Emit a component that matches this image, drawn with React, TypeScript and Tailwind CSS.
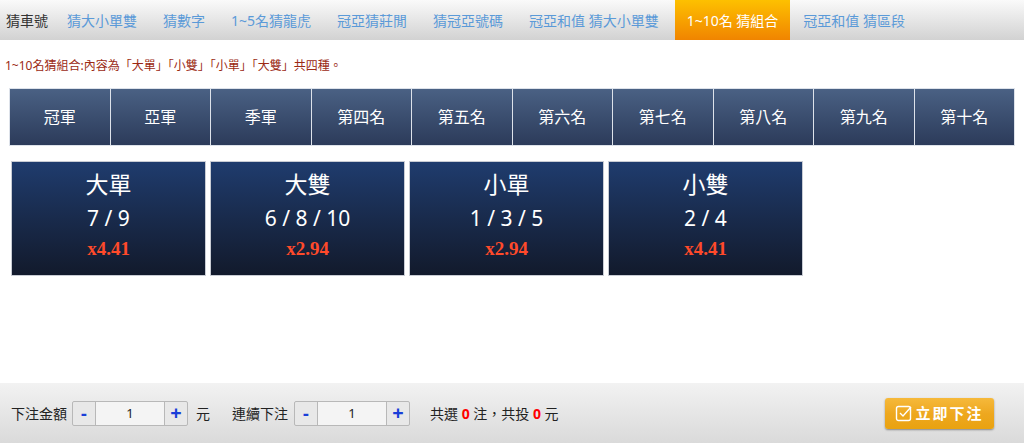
const F = { fontFamily: '"Noto Sans","Noto Sans CJK TC",sans-serif' };
const tabs = ["猜大小單雙","猜數字","1~5名猜龍虎","冠亞猜莊閒","猜冠亞號碼","冠亞和值 猜大小單雙"];
const heads = ["冠軍","亞軍","季軍","第四名","第五名","第六名","第七名","第八名","第九名","第十名"];
const cards = [["大單","7 / 9","x4.41"],["大雙","6 / 8 / 10","x2.94"],["小單","1 / 3 / 5","x2.94"],["小雙","2 / 4","x4.41"]];
function Spin() {
  return (
    <div className="flex items-center h-[25px] border border-[#b8b8b8] rounded-[2px] bg-[#e8e8e8]">
      <span className="w-[22px] text-center text-[#1a3fd8] font-bold text-[18px] leading-none">-</span>
      <div className="w-[70px] h-full bg-[#f4f4f4] border-x border-[#b8b8b8] text-center text-[13px] leading-[23px] text-[#222]">1</div>
      <span className="w-[22px] text-center text-[#1a3fd8] font-bold text-[20px] leading-none">+</span>
    </div>
  );
}
export default function App() {
  return (
    <div style={F} className="w-[1024px] h-[443px] bg-white flex flex-col overflow-hidden">
      <div className="h-[40px] flex items-stretch bg-gradient-to-b from-[#fafafa] to-[#d2d2d2] text-[14px]">
        <div className="px-[6px] flex items-center text-[#333]">猜車號</div>
        {tabs.map(t => <div key={t} className="px-[13px] flex items-center text-[#5b9ad8]">{t}</div>)}
        <div className="px-[12px] ml-[3px] flex items-center text-white bg-gradient-to-b from-[#fdc000] to-[#f08400]">1~10名 猜組合</div>
        <div className="px-[13px] flex items-center text-[#5b9ad8]">冠亞和值 猜區段</div>
      </div>
      <div className="text-[12px] text-[#9b2a14] pl-[5px] mt-[17px] leading-[18px]">1~10名猜組合:內容為「大單」「小雙」「小單」「大雙」共四種。</div>
      <div className="mx-[9px] mt-[13px] grid grid-cols-10 gap-[1px] bg-[#dde2ea] p-[1px]">
        {heads.map(h => <div key={h} className="h-[56px] flex items-center justify-center text-white text-[16px] bg-gradient-to-b from-[#4a6184] to-[#2c3b5a]">{h}</div>)}
      </div>
      <div className="flex gap-[4px] ml-[11px] mt-[15px]">
        {cards.map(([a,b,c]) => (
          <div key={a} className="w-[195px] h-[115px] border border-[#c8ccd4] bg-gradient-to-b from-[#1f3c6e] to-[#121a2c] flex flex-col items-center text-white">
            <div className="text-[23px] mt-[6px] leading-[32px]">{a}</div>
            <div className="text-[21px] mt-[4px] leading-[28px]">{b}</div>
            <div className="text-[19px] font-bold text-[#ff4a2a] mt-[5px] leading-[24px]" style={{fontFamily:'"Liberation Serif",serif'}}>{c}</div>
          </div>
        ))}
      </div>
      <div className="mt-auto h-[60px] bg-gradient-to-b from-[#f2f2f2] to-[#dadada] flex items-center text-[14px] text-[#222] pl-[11px]">
        <span>下注金額</span>
        <div className="ml-[5px]"><Spin/></div>
        <span className="ml-[8px]">元</span>
        <span className="ml-[22px]">連續下注</span>
        <div className="ml-[6px]"><Spin/></div>
        <span className="ml-[20px]">共選 <b className="text-[#ff0000]">0</b> 注，共投 <b className="text-[#ff0000]">0</b> 元</span>
        <div className="ml-auto mr-[30px] h-[31px] w-[109px] rounded-[3px] bg-gradient-to-b from-[#f6b93a] via-[#eea81f] to-[#e9a20f] shadow-[0_1px_2px_rgba(0,0,0,0.4)] flex items-center justify-center gap-[2px] text-white font-bold text-[15px] tracking-[2px]">
          <svg width="18" height="18" viewBox="0 0 18 18" fill="none" stroke="white" strokeWidth="1.4"><rect x="1.5" y="2.5" width="14" height="14" rx="2"/><path d="M5 9l3 3 8-9"/></svg>
          立即下注
        </div>
      </div>
    </div>
  );
}
